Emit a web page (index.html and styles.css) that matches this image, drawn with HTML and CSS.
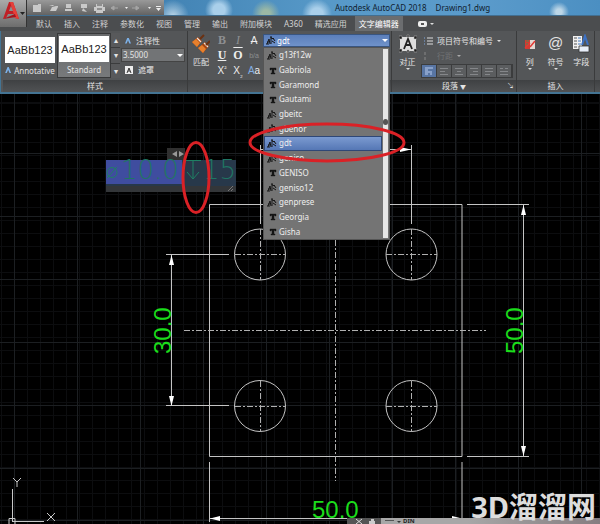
FILE: index.html
```html
<!DOCTYPE html>
<html lang="zh-CN">
<head>
<meta charset="utf-8">
<title>Autodesk AutoCAD 2018 - Drawing1.dwg</title>
<link rel="stylesheet" href="styles.css">
</head>
<body>
<svg class="defs" width="0" height="0" aria-hidden="true">
  <symbol id="shx" viewBox="0 0 10 9"><path d="M0 8h3M1 8l2-5 1 5M3 6H1M5 1v7M5 2l3 1M7 2l2 3M6 5l3 2M4 1h2" fill="none" stroke="#161616" stroke-width="1"/></symbol>
  <symbol id="ttf" viewBox="0 0 10 9"><path d="M3 2h6v2H8V3.400H7V7h1v1H4V7h1V3.400H4V4H3z" fill="#161616" stroke="#161616" stroke-width=".4"/></symbol>
</svg>
<header class="top">
  <button class="app" aria-label="应用程序菜单">
    <svg viewBox="0 0 27 27" width="27" height="27"><path d="M3 19 9 2h4l6 17-4-1-1-4H8l-2 4z" fill="#c01f26"/><path d="M10 2h3l6 17-4-1z" fill="#e5403a"/><path d="M9 11h4l-2-5z" fill="#8d8d8d"/><path d="m3 19 12-5 1 3z" fill="#a3141c"/><path d="M20 12h5l-2.500 3z" fill="#222"/></svg>
  </button>
  <div class="titlebar">
    <div class="quick">
      <svg viewBox="0 0 137 16" width="137" height="16"><g fill="#c9c9c9"><path d="M6 5h5v-1h3v8H6zM22 5h4l1 1h4v1h-6l-2 4h6l2-4h-2M39 4h5v4h-5zM38 9h7v2h-7zM54 4h6v4h-6zM56 8l4 4-5-1z"/><path d="M69 4h7v3h2v4h-2v2h-7v-2h-2V7h2z"/></g><path d="M70 5h5M70 9h5" stroke="#555"/><path d="M84 8l3-2v4zM87 8h4M112 8l-3-2v4zM109 8h-4" fill="#a5a5a5" stroke="#a5a5a5"/><path d="M98 7h3l-1.500 2zM121 7h3l-1.500 2zM129 8h5l-2.500 3zM129 6h5v1h-5z" fill="#eee"/></svg>
    </div>
    <div class="title"><span>Autodesk AutoCAD 2018</span><span>Drawing1.dwg</span></div>
  </div>
  <nav class="tabs">
    <a href="#">默认</a><a href="#">插入</a><a href="#">注释</a><a href="#">参数化</a><a href="#">视图</a><a href="#">管理</a><a href="#">输出</a><a href="#">附加模块</a><a href="#">A360</a><a href="#">精选应用</a><a href="#" class="on">文字编辑器</a>
    <button class="plain" aria-label="功能区显示"><svg viewBox="0 0 18 8" width="18" height="8"><rect x="1" y="1" width="9" height="6" rx="2" fill="#eee"/><path d="M4 3h3v2H4z" fill="#555"/><path d="M13 3h4l-2 2z" fill="#ddd"/></svg></button>
  </nav>
</header>

<section class="ribbon">
  <div class="panel styles">
    <div class="body">
      <button class="swatch"><b>AaBb123</b><span><i class="tri"></i>Annotative</span></button>
      <button class="swatch sel"><b>AaBb123</b><span>Standard</span></button>
      <div class="spin"><button aria-label="上一个">▴</button><button aria-label="下一个">▾</button><button aria-label="更多">▾</button></div>
      <div class="rows">
        <button class="plain row"><i class="tri"></i>注释性</button>
        <div class="height"><select aria-label="文字高度"><option>3.5000</option></select></div>
        <button class="plain row"><svg viewBox="0 0 8 8" width="8" height="8"><path d="M0 0h8v8H0z" fill="#eee"/><path d="m2 7 2-5 2 5M3 5h2" stroke="#333" fill="none"/></svg>遮罩</button>
      </div>
    </div>
    <h2>样式</h2>
  </div>

  <div class="panel format">
    <div class="body">
      <button class="plain big"><svg viewBox="0 0 18 20" width="18" height="20"><path d="M0 8 6 3l4 4-5 6zM6 14l7-6 4 4-6 7z" fill="#a8440f"/><path d="m0 8 4-3 4 4-3 4zM6 14l4-3 4 4-3 4z" fill="#e8802c"/><path d="m5 4 4 4M12 9l4 4" stroke="#f2e6dc" stroke-width="1.200"/><path d="m8 5 4-4M14 11l4-4" stroke="#6b3112" stroke-width="2"/></svg><span>匹配</span></button>
      <div class="glyphs">
        <button class="dim serif bold">B</button><button class="dim serif ital">I</button><button class="strike">A</button>
        <button class="serif bold under">U</button><button class="serif bold over">O</button><button class="dim small">b/a</button>
        <button>X<sup>²</sup></button><button>X<sub>₂</sub></button><button class="case"><i>A</i>a</button>
      </div>
      <div class="combo">
        <svg width="10" height="9"><use href="#shx"/></svg>
        <select aria-label="字体"><option>gdt</option></select>
        <div class="drop">
          <ul role="listbox" aria-label="字体列表">
            <li role="option"><svg><use href="#shx"/></svg>g13f12w</li>
            <li role="option"><svg><use href="#ttf"/></svg>Gabriola</li>
            <li role="option"><svg><use href="#ttf"/></svg>Garamond</li>
            <li role="option"><svg><use href="#ttf"/></svg>Gautami</li>
            <li role="option"><svg><use href="#shx"/></svg>gbeitc</li>
            <li role="option"><svg><use href="#shx"/></svg>gbenor</li>
            <li role="option" aria-selected="true"><svg><use href="#shx"/></svg>gdt</li>
            <li role="option"><svg><use href="#shx"/></svg>geniso</li>
            <li role="option"><svg><use href="#ttf"/></svg>GENISO</li>
            <li role="option"><svg><use href="#shx"/></svg>geniso12</li>
            <li role="option"><svg><use href="#shx"/></svg>genprese</li>
            <li role="option"><svg><use href="#ttf"/></svg>Georgia</li>
            <li role="option"><svg><use href="#ttf"/></svg>Gisha</li>
          </ul>
          <div class="track"><i></i></div>
        </div>
      </div>
    </div>
    <h2></h2>
  </div>

  <div class="panel para">
    <div class="body">
      <button class="plain big"><svg viewBox="0 0 18 18" width="18" height="18"><path d="M1 2h16v14H1z" fill="#ddd"/><path d="m5 14 4-10 4 10M6.500 10h5" stroke="#222" stroke-width="1.800" fill="none"/><path d="M0 1h3v3H0zM15 1h3v3h-3zM0 14h3v3H0zM15 14h3v3h-3zM8 0h2v2H8zM8 15h2v2H8z" fill="#1c1c1c" stroke="#bbb" stroke-width=".5"/></svg><span>对正</span><em></em></button>
      <div class="lists">
        <button class="plain row"><svg viewBox="0 0 9 8" width="9" height="8"><path d="M3 1h6M3 4h6M3 7h6" stroke="#ddd"/><path d="M0 1h1M0 4h1M0 7h1" stroke="#7fa7e0"/></svg>项目符号和编号<em></em></button>
        <button class="plain row off"><svg viewBox="0 0 9 8" width="9" height="8"><path d="M1 0v3M1 5v3" stroke="#888"/></svg><span>行距</span><em></em></button>
        <div class="align">
          <button class="on" aria-label="默认"><svg viewBox="0 0 10 9"><path d="M1 1h8M1 3h3M1 5h5M1 7h3M7 4v4"/></svg></button>
          <button aria-label="左对齐"><svg viewBox="0 0 10 9"><path d="M1 1.500h8M1 4.500h5M1 7.500h8"/></svg></button>
          <button aria-label="居中"><svg viewBox="0 0 10 9"><path d="M1 1.500h8M3 4.500h4M1 7.500h8"/></svg></button>
          <button aria-label="右对齐"><svg viewBox="0 0 10 9"><path d="M1 1.500h8M4 4.500h5M1 7.500h8"/></svg></button>
          <button aria-label="对正"><svg viewBox="0 0 10 9"><path d="M1 1.500h8M1 4.500h8M1 7.500h5"/></svg></button>
          <button aria-label="分散对齐"><svg viewBox="0 0 10 9"><path d="M1 1.500h3M6 1.500h3M1 4.500h8M1 7.500h8"/></svg></button>
        </div>
      </div>
    </div>
    <h2>段落 <small>▼</small><i class="launch">↘</i></h2>
  </div>

  <div class="panel insert">
    <div class="body">
      <button class="plain big"><svg viewBox="0 0 18 18" width="18" height="18"><path d="M4 5h5v9H4z" fill="#d33b32"/><path d="M9 5h5v9H9z" fill="#e2d8d2"/><path d="M4 13l5-5M9 12l5-6" stroke="#e23a34" stroke-width="1.500"/><path d="M5 6h3M5 9h2" stroke="#4f8750"/></svg><span>列</span><em></em></button>
      <button class="plain big"><b>@</b><span>符号</span><em></em></button>
      <button class="plain big"><svg viewBox="0 0 18 18" width="18" height="18"><path d="M1 1h9v13H1z" fill="#f1f1f1"/><path d="M2 3h3M2 6h3M2 9h3M2 12h3" stroke="#555"/><path d="M6 3h3M6 6h3M6 9h3" stroke="#477abf"/><path d="m10 10 3-9 3 9" fill="none" stroke="#3c71c4" stroke-width="2"/><path d="M7 11h10v6H7z" fill="#e8eef8" stroke="#333" stroke-width=".8"/></svg><span>字段</span></button>
    </div>
    <h2>插入</h2>
  </div>
  <div class="panel rest"><div class="body"></div><h2></h2></div>
</section>

<main class="canvas">
  <svg class="drawing" viewBox="0 94 600 430" width="600" height="430">
    <g class="line">
      <path d="M209.500 204.500H462V456.500H209.500z"/>
      <circle cx="260" cy="254.500" r="25.500"/><circle cx="411.500" cy="254.500" r="25.500"/>
      <circle cx="260" cy="406" r="25.500"/><circle cx="411.500" cy="406" r="25.500"/>
      <path d="M166 254.500h63M166 405.500h63M171.500 255v151M467 204.500h62M467 456.500h62M523.500 205v251M209.500 462v60M462 462v60M210 518.500h252M260.500 145v79M411.500 145v79M260 149.500h151"/>
    </g>
    <g class="centre">
      <path d="M184 330.500h302M335.500 180v301"/>
      <path d="M235 254.500h51M260.500 229v51M386 254.500h51M411.500 229v51M235 406.500h51M260.500 381v51M386 406.500h51M411.500 381v51"/>
    </g>
    <path class="arrows" d="M171.500 255l-2.500 10h5zM171.500 406l-2.500-10h5zM523.500 205l-2.500 10h5zM523.500 456l-2.500-10h5zM210 518.500l10-2.500v5zM462 518.500l-10-2.500v5zM411 149.500l-11-2.500v5z"/>
    <g class="dims">
      <text transform="translate(171 354) rotate(-90)">30.0</text>
      <text transform="translate(523 354) rotate(-90)">50.0</text>
      <text x="312" y="518">50.0</text>
    </g>
    <g class="ucs"><path d="M12.500 489v33M12 521.500h32M9 518.500h6v6H9z"/><path d="M13 478l4 4 4-4M17 482v5M47 513l8 8M55 513l-8 8"/></g>
    <path d="M167 148h18v12h-18z" fill="#303030"/>
    <path d="m177 151-5 3 5 3zM179 151l5 3-5 3z" fill="#999"/>
    <path d="M106 160h130v32H106z" fill="#333639"/>
    <path d="M106 160h130v26H106z" fill="#27384a"/>
    <path d="M106 160h76v24h-76z" fill="#3f4d9f"/>
    <path d="M228 191l5-5M231 191l2-2" stroke="#777"/>
    <g class="mtext"><text x="121" y="179">10.0</text><text x="203" y="179">15</text><path d="M186 160.500h15M193 161v18M187 172l6 7 6-7M107 178l10-11"/><circle cx="112" cy="172.500" r="5"/></g>
  </svg>
  <div class="status"><span class="tools"><svg viewBox="0 0 34 6" width="34" height="6"><path d="m9 1 6 5M15 1 9 6" stroke="#ddd"/><path d="M22 3h6v3h-6zM24 1h3v2h-3z" fill="#ccc"/></svg></span><svg viewBox="0 0 22 6" width="22" height="6"><path d="M4 2.500h9" stroke="#555"/><path d="M16 3h4l-2 2z" fill="#333"/></svg><span class="cmd">DIN</span></div>
  <p class="mark">3D溜溜网</p>
</main>

<svg class="notes" viewBox="0 0 600 524" width="600" height="524" aria-hidden="true">
  <ellipse cx="196" cy="177.500" rx="13" ry="35"/>
  <ellipse cx="327" cy="142.500" rx="77" ry="18.500"/>
</svg>
</body>
</html>
```
FILE: styles.css
```css
* { box-sizing: border-box; }
body {
  margin: 0;
  min-height: 100vh;
  display: flex;
  flex-direction: column;
  position: relative;
  overflow: hidden;
  background: #000;
  color: #e4e4e4;
  font: 8px/10px "Noto Sans", "Noto Sans CJK SC", sans-serif;
}
.defs { position: absolute; }
button, select {
  margin: 0;
  padding: 0;
  border: 0;
  background: none;
  color: inherit;
  font: inherit;
  appearance: none;
}
svg { display: block; flex: none; }

/* Title bar and tabs */
.top {
  display: grid;
  grid-template-columns: 27px 1fr;
  grid-template-rows: 16px 15px;
  background: #4b4d4f;
}
.app {
  grid-row: 1 / 3;
  height: 27px;
  background: linear-gradient(#aaa, #6d6d6d);
  border-right: 1px solid #333;
}
.titlebar {
  display: flex;
  background:
    radial-gradient(circle at 146px 16px, #b9d4e6, transparent 16px),
    radial-gradient(circle at 192px 10px, #a9cfea 6px, transparent 14px),
    radial-gradient(circle at 239px 14px, #9bb9a5 4px, transparent 14px),
    radial-gradient(circle at 290px 14px, #a9cfea 6px, transparent 15px),
    radial-gradient(circle at 532px 12px, #bcd6e7 3px, transparent 10px),
    linear-gradient(90deg, #4283b4 137px, #5799c8 300px, #5b9bcb 450px, #4b8fc2);
  border-bottom: 1px solid #426f91;
}
.quick { width: 137px; background: linear-gradient(#999, #636363); }
.title {
  margin-left: 171px;
  display: flex;
  gap: 9px;
  color: #10202e;
  line-height: 15px;
  white-space: nowrap;
}
.tabs {
  display: flex;
  align-items: center;
  gap: 12px;
  padding-left: 9px;
  white-space: nowrap;
}
.tabs a { color: #d2d2d2; text-decoration: none; line-height: 15px; }
.tabs .on {
  margin: 0 2px 0 -4px;
  padding: 0 4px;
  background: #6b6d6f;
  color: #fff;
}

/* Ribbon */
.ribbon {
  display: flex;
  height: 63px;
  padding-left: 2px;
  background: #545658;
  border-bottom: 2px solid #447493;
  border-left: 1px solid #447493;
}
.panel { display: flex; flex-direction: column; border-right: 1px solid #3a3b3c; }
.body { flex: 1; display: flex; padding-top: 2px; }
.panel h2 {
  position: relative;
  height: 12px;
  margin: 0;
  background: linear-gradient(#3f4143, #505254);
  font: inherit;
  line-height: 12px;
  text-align: center;
}
h2 small { font-size: 6px; }
.launch { position: absolute; right: 2px; top: 0; font-size: 7px; font-style: normal; }
.styles { width: 185px; }
.format { width: 204px; }
.para { width: 125px; }
.insert { width: 78px; }
.rest { flex: 1; border: 0; }

.swatch { width: 54px; height: 45px; padding: 3px 2px 0; }
.swatch.sel { background: linear-gradient(#686a6c, #77797b); border: 1px solid #38393a; padding: 2px 1px 0; }
.swatch b {
  display: block;
  height: 26px;
  background: #fff;
  color: #222;
  font: 11px/27px "Liberation Sans", sans-serif;
}
.swatch span { display: flex; justify-content: center; align-items: center; gap: 3px; line-height: 15px; }
.tri {
  width: 6px;
  height: 6px;
  background: #7db1e8;
  clip-path: polygon(40% 0, 60% 0, 100% 100%, 72% 100%, 50% 45%, 28% 100%, 0 100%);
}
.spin { display: flex; flex-direction: column; width: 9px; height: 45px; background: #3b3c3d; gap: 1px; }
.spin button { flex: 1; background: #58595b; }
.rows { width: 64px; margin-left: 1px; display: flex; flex-direction: column; }
.row { display: flex; align-items: center; gap: 5px; height: 15px; padding-left: 4px; white-space: nowrap; }
.height {
  display: flex;
  align-items: center;
  height: 14px;
  padding-left: 1px;
  border: 1px solid #444;
  background: #727476;
}
.height select { flex: 1; }

.big { display: flex; flex-direction: column; align-items: center; width: 26px; padding-top: 1px; }
.big > svg { height: 20px; }
.big b { height: 20px; font: 15px/18px "Liberation Sans", sans-serif; }
.big span { margin-top: 3px; }
em { width: 0; height: 0; border: 2px solid transparent; border-top: 2px solid #ddd; border-bottom: 0; }
.big em { margin-top: 1px; }

.glyphs {
  display: grid;
  grid-template-columns: repeat(3, 16px);
  grid-template-rows: repeat(3, 15px);
  width: 49px;
  color: #eee;
  font: 10px/15px "Liberation Sans", sans-serif;
}
.glyphs .serif { font-family: "Liberation Serif", serif; font-size: 12px; }
.bold { font-weight: bold; }
.ital { font-style: italic; }
.dim { color: #8d8f91; }
.small { font-size: 7px; }
.strike { text-decoration: line-through; }
.under { text-decoration: underline; }
.over { text-decoration: overline; }
.glyphs sup, .glyphs sub { font-size: 7px; line-height: 0; }
.case i { color: #83afe4; font-style: normal; }

.combo {
  position: relative;
  display: flex;
  align-items: center;
  width: 127px;
  height: 13px;
  margin-top: 1px;
  padding-left: 2px;
  background: linear-gradient(#5b7fbb, #6f92cb);
  border: 1px solid #395580;
}
.combo select { flex: 1; padding-left: 1px; color: #fff; }
.combo::after, .height::after {
  content: "";
  border: 3px solid transparent;
  border-top-color: #fff;
  border-bottom: 0;
  margin-right: 1px;
}
.drop {
  position: absolute;
  z-index: 2;
  top: 12px;
  left: -1px;
  width: 127px;
  height: 193px;
  display: flex;
  background: #747474;
  border: 1px solid #555;
}
.drop ul { flex: 1; display: flex; flex-direction: column; margin: 0; padding: 0 1px 0 0; list-style: none; }
.drop li { flex: 1; display: flex; align-items: center; gap: 2px; padding-left: 2px; color: #eee; border: 1px solid transparent; }
.drop li svg { width: 10px; height: 9px; }
.drop [aria-selected] { background: linear-gradient(#7b9ad0, #5577b5); border-color: #2f4776; }
.track { width: 5px; margin: 1px 1px 1px 0; background: #e6e6e6; }
.track i { display: block; width: 5px; height: 6px; margin-top: 70px; border-radius: 3px; background: #555; }

.para .big { width: 29px; padding-left: 2px; }
.lists { width: 92px; }
.lists .row { padding-left: 3px; gap: 4px; }
.off { color: #707274; }
.off em { border-top-color: #aaa; }
.align { display: flex; margin-top: 1px; border: 1px solid #3b3c3d; }
.align button { flex: 1; height: 12px; padding: 1px 2px; border-right: 1px solid #3b3c3d; background: #5b5d5f; }
.align svg { width: 10px; height: 9px; }
.align path { stroke: #85878a; fill: none; }
.align .on { background: #5875a3; }
.align .on path { stroke: #b8cdf0; }

/* Model space */
.canvas {
  flex: 1;
  position: relative;
  background:
    repeating-linear-gradient(90deg, #1c1f22 0 1px, transparent 1px 63px) 14px 0,
    repeating-linear-gradient(#1c1f22 0 1px, transparent 1px 63px) 0 -4px,
    repeating-linear-gradient(90deg, #0c0d0f 0 1px, transparent 1px 13px) 1px 0,
    repeating-linear-gradient(#0c0d0f 0 1px, transparent 1px 13px) 0 9px,
    #000;
}
.line { fill: none; stroke: #c4c4c4; stroke-width: 1; }
.centre { fill: none; stroke: #b0b0b0; stroke-dasharray: 6 2 2 2; }
.arrows { fill: #fff; }
.dims { fill: #1bdc1b; font: 24px "Liberation Sans", sans-serif; }
.ucs { fill: none; stroke: #c9c9c9; }
.mtext { fill: #1f7563; font: 200 26px "DejaVu Sans", sans-serif; }
.mtext path, .mtext circle { fill: none; stroke: #1f8064; stroke-width: 1; }
.status {
  position: absolute;
  right: 0;
  bottom: 0;
  left: 347px;
  display: flex;
  height: 6px;
  background: linear-gradient(90deg, #a7a7a7 120px, #857d80);
}
.tools { width: 34px; background: #555; }
.cmd { color: #222; font-size: 6px; line-height: 6px; font-weight: bold; }
.mark {
  position: absolute;
  right: 4px;
  bottom: 0;
  margin: 0;
  color: #ddd;
  font: bold 29px/34px "Noto Sans", "Noto Sans CJK SC", sans-serif;
}
.notes { position: absolute; top: 0; left: 0; z-index: 3; fill: none; stroke: #da2126; stroke-width: 3; pointer-events: none; }
```
